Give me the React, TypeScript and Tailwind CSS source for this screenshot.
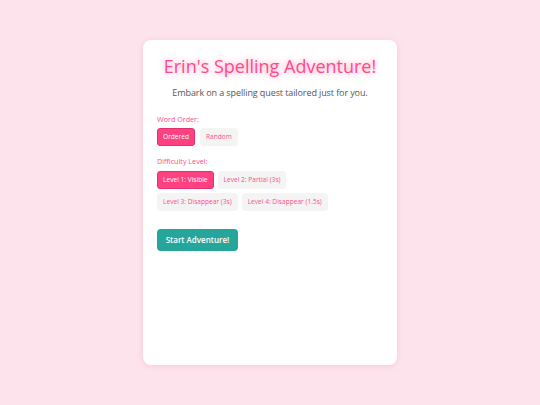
import { useState } from "react";

const orders = ["Ordered", "Random"];
const levels = [
  "Level 1: Visible",
  "Level 2: Partial (3s)",
  "Level 3: Disappear (3s)",
  "Level 4: Disappear (1.5s)",
];

export default function App() {
  const [order, setOrder] = useState("Ordered");
  const [level, setLevel] = useState(levels[0]);

  return (
    <div
      className="flex min-h-[405px] w-full justify-center bg-[#fde4ec] pt-[40px]"
      style={{ fontFamily: '"Open Sans", "Noto Sans", sans-serif' }}
    >
      <div className="h-[325px] w-[254px] rounded-lg bg-white px-[14px] pt-[12px] shadow-[0_1px_6px_rgba(240,150,180,0.35)]">
        <h1 className="whitespace-nowrap text-center text-[18px] leading-[28px] text-[#ff4a8a] [text-shadow:0_0_6px_rgba(255,77,141,0.6)]">
          Erin's Spelling Adventure!
        </h1>
        <p className="mt-[6px] whitespace-nowrap text-center text-[9px] leading-[14px] tracking-[-0.1px] text-[#555]">
          Embark on a spelling quest tailored just for you.
        </p>

        <div className="mt-[14px] text-[7.2px] leading-[10px] text-[#ff4d8d]">Word Order:</div>
        <div className="mt-[4px] flex gap-[5px]">
          {orders.map((o) => (
            <OptionButton key={o} active={o === order} onClick={() => setOrder(o)}>
              {o}
            </OptionButton>
          ))}
        </div>

        <div className="mt-[10px] text-[7.2px] leading-[10px] text-[#ff4d8d]">Difficulty Level:</div>
        <div className="mt-[5px] flex w-[200px] flex-wrap gap-x-[4px] gap-y-[4px]">
          {levels.map((l) => (
            <OptionButton key={l} active={l === level} onClick={() => setLevel(l)}>
              {l}
            </OptionButton>
          ))}
        </div>

        <button className="mt-[18px] h-[22px] w-[81px] rounded-[4px] bg-[#26a69a] text-[8px] font-semibold text-white">
          Start Adventure!
        </button>
      </div>
    </div>
  );
}

function OptionButton({
  active,
  onClick,
  children,
}: {
  active: boolean;
  onClick: () => void;
  children: React.ReactNode;
}) {
  return (
    <button
      onClick={onClick}
      className={
        active
          ? "h-[18px] rounded-[3px] border border-[#e0306e] bg-[#ff4081] px-[5px] text-[6.6px] text-white"
          : "h-[18px] rounded-[3px] border border-[#f4f4f4] bg-[#f4f4f4] px-[5px] text-[6.6px] text-[#ff4d8d]"
      }
    >
      {children}
    </button>
  );
}
